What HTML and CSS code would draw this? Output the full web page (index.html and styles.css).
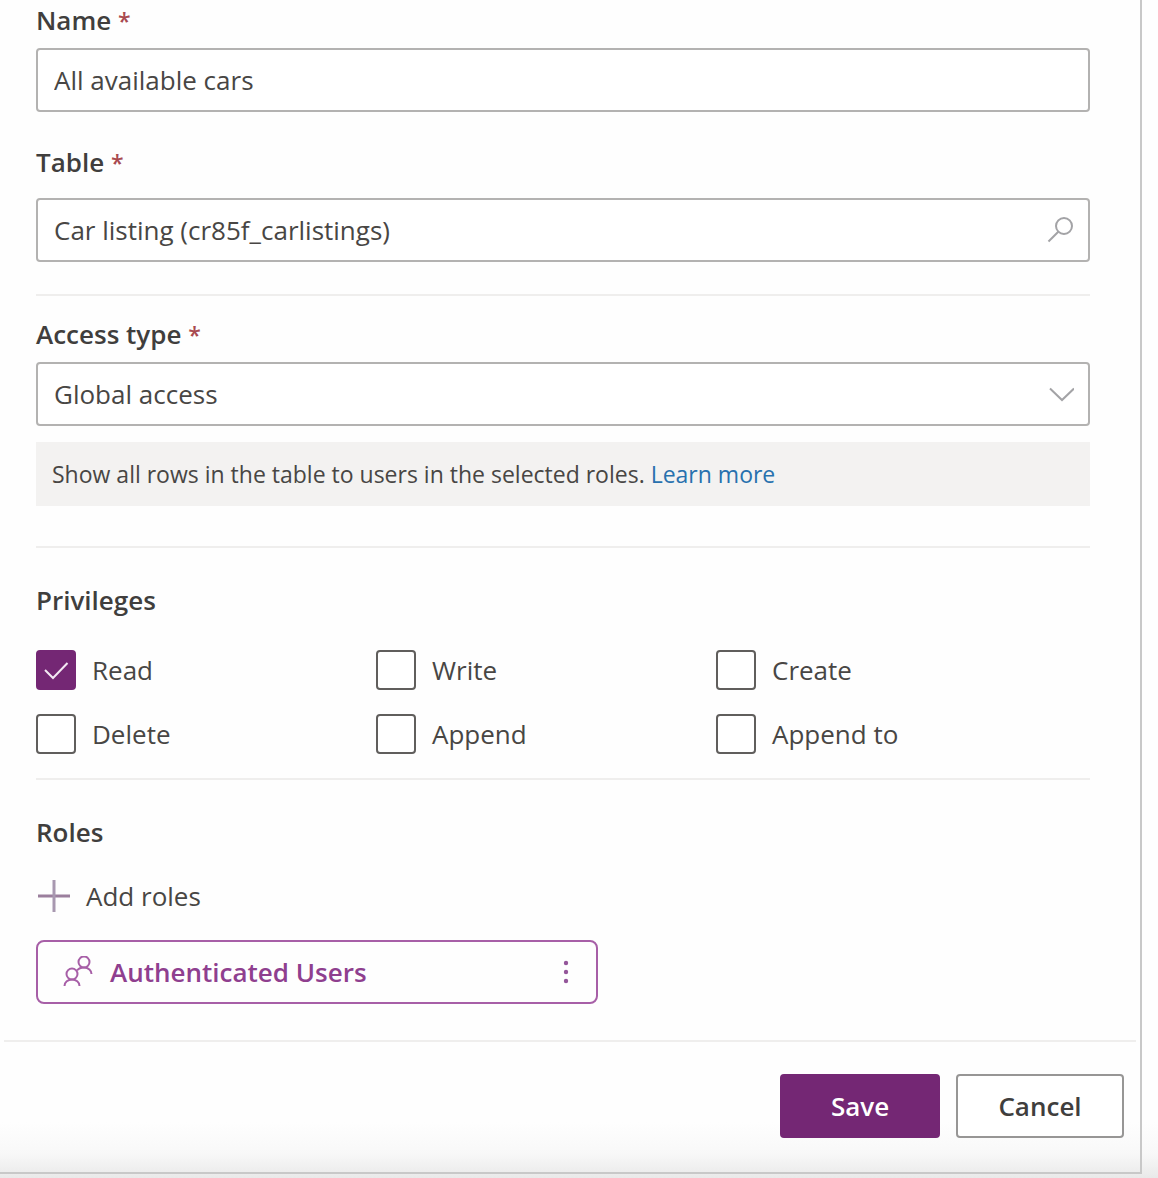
FILE: index.html
```html
<!DOCTYPE html>
<html lang="en">
<head>
  <meta charset="utf-8">
  <meta name="viewport" content="width=device-width, initial-scale=1">
  <title>Table permission</title>
  <link rel="stylesheet" href="styles.css">
</head>
<body>
  <form class="panel">
    <div class="content">
      <div class="field">
        <label class="heading" for="name">Name <span class="required">*</span></label>
        <input class="control" id="name" type="text" value="All available cars" required>
      </div>

      <div class="field field-table">
        <label class="heading" for="table">Table <span class="required">*</span></label>
        <div class="control-wrap">
          <input class="control" id="table" type="text" value="Car listing (cr85f_carlistings)" required>
          <svg class="control-icon" viewBox="0 0 28 28" aria-hidden="true"><circle cx="18" cy="10" r="8"/><path d="M12.300 15.700 2.500 25.500"/></svg>
        </div>
      </div>

      <hr class="rule rule-table">

      <div class="field">
        <label class="heading" for="access">Access type <span class="required">*</span></label>
        <div class="control-wrap">
          <select class="control" id="access" required>
            <option>Global access</option>
          </select>
          <svg class="control-icon" viewBox="0 0 28 28" aria-hidden="true"><path d="M4 8.500 16 20 28 8.500"/></svg>
        </div>
      </div>
      <p class="note">Show all rows in the table to users in the selected roles. <a class="link" href="#">Learn more</a></p>

      <hr class="rule rule-access">

      <fieldset class="privileges">
        <legend class="heading">Privileges</legend>
        <div class="checks">
          <label class="check"><span class="box"><input class="tick" type="checkbox" checked><svg class="mark" viewBox="0 0 40 40" aria-hidden="true"><path d="M9 20 17 28 31.500 13"/></svg></span>Read</label>
          <label class="check"><span class="box"><input class="tick" type="checkbox"><svg class="mark" viewBox="0 0 40 40" aria-hidden="true"><path d="M9 20 17 28 31.500 13"/></svg></span>Write</label>
          <label class="check"><span class="box"><input class="tick" type="checkbox"><svg class="mark" viewBox="0 0 40 40" aria-hidden="true"><path d="M9 20 17 28 31.500 13"/></svg></span>Create</label>
          <label class="check"><span class="box"><input class="tick" type="checkbox"><svg class="mark" viewBox="0 0 40 40" aria-hidden="true"><path d="M9 20 17 28 31.500 13"/></svg></span>Delete</label>
          <label class="check"><span class="box"><input class="tick" type="checkbox"><svg class="mark" viewBox="0 0 40 40" aria-hidden="true"><path d="M9 20 17 28 31.500 13"/></svg></span>Append</label>
          <label class="check"><span class="box"><input class="tick" type="checkbox"><svg class="mark" viewBox="0 0 40 40" aria-hidden="true"><path d="M9 20 17 28 31.500 13"/></svg></span>Append to</label>
        </div>
      </fieldset>

      <hr class="rule rule-privileges">

      <section class="roles">
        <h2 class="heading">Roles</h2>
        <button class="add" type="button">
          <svg class="add-icon" viewBox="0 0 36 36" aria-hidden="true"><path class="bar" d="M2 18H34"/><path class="stem" d="M18 2V34"/></svg>
          Add roles
        </button>
        <div class="role">
          <svg class="people" viewBox="0 0 32 32" aria-hidden="true"><circle cx="21" cy="6" r="5.500"/><circle cx="9" cy="18" r="5.500"/><path d="M1.500 30C1.500 26 5 23.500 9 23.500S16.500 26 16.500 30M14 14.500C15.500 12.500 18 11.500 21 11.500 25.500 11.500 28.500 14.500 28.500 18"/></svg>
          <span class="role-name">Authenticated Users</span>
          <button class="more" type="button" aria-label="More options">
            <svg class="dots" viewBox="0 0 8 24" aria-hidden="true"><circle cx="4" cy="3" r="2.200"/><circle cx="4" cy="12" r="2.200"/><circle cx="4" cy="21" r="2.200"/></svg>
          </button>
        </div>
      </section>
    </div>

    <footer class="footer">
      <button class="button primary" type="submit">Save</button>
      <button class="button" type="button">Cancel</button>
    </footer>
  </form>
</body>
</html>
```

FILE: styles.css
```css
* {
  box-sizing: border-box;
}

body {
  margin: 0;
  min-height: 100vh;
  padding: 0 16px 4px 0;
  background: linear-gradient(to top, #e9e9e9, #f8f8f8 24px, #fefefe 56px);
  color: #484644;
  font: 26px/40px "Segoe UI", "Open Sans", "Noto Sans", sans-serif;
}

input,
select,
button {
  margin: 0;
  color: inherit;
  font: inherit;
}

.panel {
  border: solid #c8c8c8;
  border-width: 0 2px 2px 0;
}

.content {
  padding: 0 50px 36px 36px;
}

.heading {
  display: block;
  margin: 0;
  padding: 0;
  color: #403e3d;
  font-size: 26px;
  font-weight: 600;
}

.required {
  color: #a94a50;
  font-size: 23px;
  line-height: 1;
}

.field {
  display: flex;
  flex-direction: column;
  gap: 8px;
}

.field-table {
  gap: 16px;
  margin-top: 30px;
}

.control-wrap {
  position: relative;
}

.control {
  display: block;
  width: 100%;
  height: 64px;
  padding: 0 64px 0 16px;
  border: 2px solid #b3b2b1;
  border-radius: 4px;
  background: #fff;
  appearance: none;
}

.control-icon {
  position: absolute;
  top: 18px;
  right: 16px;
  width: 28px;
  height: 28px;
  fill: none;
  stroke: #a3a3a6;
  stroke-width: 2;
  pointer-events: none;
}

.rule {
  height: 2px;
  margin: 0;
  border: 0;
  background: #efeeed;
}

.rule-table {
  margin: 32px 0 18px;
}

.rule-access {
  margin: 40px 0 32px;
}

.rule-privileges {
  margin: 24px 0 32px;
}

.note {
  margin: 16px 0 0;
  padding: 12px 16px;
  background: #f3f2f1;
  font-size: 23px;
}

.link {
  color: #2871ae;
  text-decoration: none;
}

.privileges {
  margin: 0;
  padding: 0;
  border: 0;
}

.checks {
  display: grid;
  grid-template-columns: repeat(3, minmax(0, 340px));
  row-gap: 24px;
  margin-top: 30px;
}

.check {
  display: flex;
  align-items: center;
  gap: 16px;
}

.box {
  display: grid;
  width: 40px;
  height: 40px;
}

.tick,
.mark {
  grid-area: 1 / 1;
  width: 40px;
  height: 40px;
}

.tick {
  border: 2px solid #605e5c;
  border-radius: 4px;
  background: #fff;
  appearance: none;
}

.tick:checked {
  border-color: #742774;
  background: #742774;
}

.mark {
  visibility: hidden;
  fill: none;
  stroke: #f3e9f3;
  stroke-width: 2;
  pointer-events: none;
}

.tick:checked + .mark {
  visibility: visible;
}

.add {
  display: flex;
  align-items: center;
  gap: 14px;
  margin: 24px 0;
  padding: 0;
  border: 0;
  background: none;
}

.add-icon {
  width: 36px;
  height: 36px;
  fill: none;
  stroke-width: 3;
}

.bar {
  stroke: #9b7f9d;
}

.stem {
  stroke: #a898b0;
}

.role {
  display: flex;
  align-items: center;
  max-width: 562px;
  height: 64px;
  padding: 0 16px 0 25px;
  border: 2px solid #a75fa7;
  border-radius: 8px;
  color: #8f3f8f;
  font-weight: 600;
}

.people {
  width: 32px;
  height: 32px;
  margin-right: 15px;
  fill: none;
  stroke: #a75fa7;
  stroke-width: 2;
}

.role-name {
  flex: 1;
}

.more {
  display: grid;
  place-items: center;
  width: 28px;
  height: 40px;
  padding: 0;
  border: 0;
  background: none;
}

.dots {
  width: 8px;
  height: 24px;
  fill: #94569a;
}

.footer {
  display: flex;
  justify-content: flex-end;
  gap: 16px;
  margin: 0 4px;
  padding: 32px 12px 34px;
  border-top: 2px solid #efeeed;
}

.button {
  min-width: 168px;
  height: 64px;
  padding: 0 40px;
  border: 2px solid #979695;
  border-radius: 4px;
  background: #fff;
  color: #403e3d;
  font-weight: 600;
}

.primary {
  min-width: 160px;
  border-color: #742774;
  background: #742774;
  color: #fff;
}
```
